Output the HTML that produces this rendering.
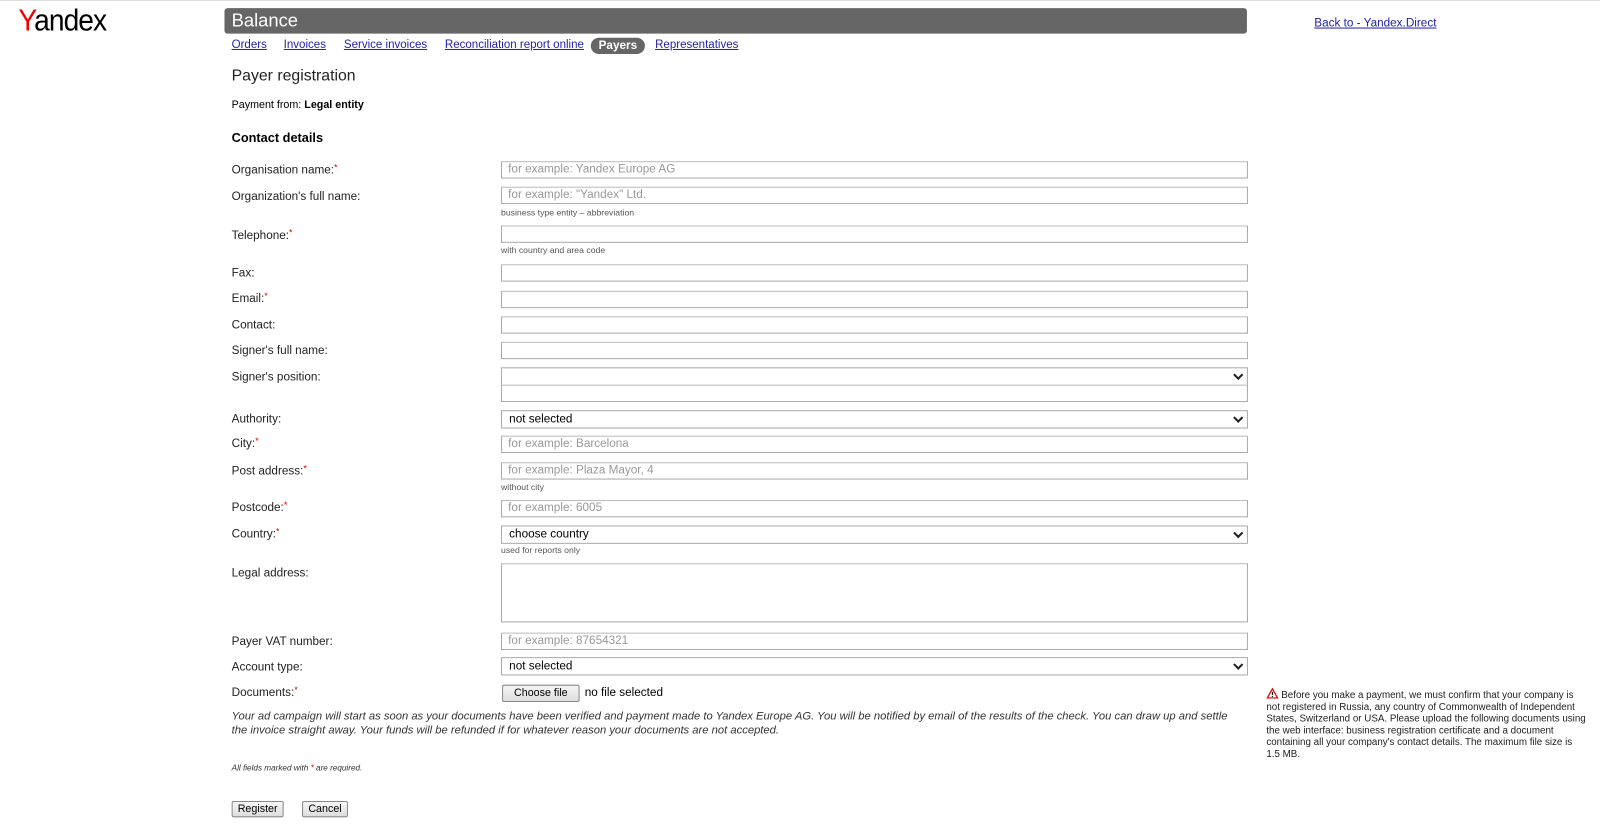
<!DOCTYPE html>
<html><head><meta charset="utf-8"><style>
*{margin:0;padding:0;box-sizing:border-box}
body{width:1600px;height:826px;background:#fff;font-family:"Liberation Sans",Arial,sans-serif;color:#000;position:relative;overflow:hidden;border-top:1px solid #ddd}
#w{position:absolute;left:0;top:0;width:1568px;height:810px;transform:scale(1.0204);transform-origin:0 0}
.a{position:absolute;white-space:nowrap}
.lbl{position:absolute;left:227px;font-size:11.5px;color:#222;line-height:14px}
.st{color:#d00;font-size:9px;vertical-align:top;position:relative;top:-3px}
.in{position:absolute;left:491px;width:732px;height:17px;border:1px solid #aaa;border-top-color:#bbb;background:#fff;font-size:11.5px;color:#999;padding-left:6px;line-height:15px}
.sel{position:absolute;left:491px;width:732px;height:18px;border:1px solid #aaa;background:#fff;font-size:11.5px;color:#000;padding-left:7px;line-height:16px}
.sel:after{content:"";position:absolute;right:5px;top:3px;width:5px;height:5px;border-right:2px solid #222;border-bottom:2px solid #222;transform:rotate(45deg)}
.hint{position:absolute;left:491px;font-size:8.5px;color:#555}
nav a{position:absolute;top:37px;font-size:11.3px;color:#2222aa;text-decoration:underline}
.btn{position:absolute;border:1px solid #888;background:linear-gradient(#f6f6f6,#ddd);font-size:10.5px;text-align:center;line-height:14px;border-radius:2px}
</style></head><body><div id="w">
<div class="a" style="left:18px;top:3px;font-size:30px;letter-spacing:-1px;transform:scaleX(0.92);transform-origin:left"><span style="color:#e00">Y</span>andex</div>
<div class="a" style="left:220px;top:7px;width:1002px;height:25px;background:#666;border-radius:3px;color:#fff;font-size:18px;padding-left:7px;line-height:24px">Balance</div>
<a class="a" style="left:1288px;top:16px;font-size:11.5px;color:#2222aa;text-decoration:underline">Back to - Yandex.Direct</a>
<nav>
<a style="left:227px">Orders</a><a style="left:278px">Invoices</a><a style="left:337px">Service invoices</a><a style="left:436px">Reconciliation report online</a>
<span class="a" style="left:579px;top:36px;width:53px;height:16px;background:#666;color:#fff;border-radius:8px;font-size:11.5px;font-weight:bold;text-align:center;line-height:16px">Payers</span>
<a style="left:642px">Representatives</a>
</nav>
<div class="a" style="left:227px;top:65px;font-size:15.5px;color:#222">Payer registration</div>
<div class="a" style="left:227px;top:96px;font-size:10.5px">Payment from: <b>Legal entity</b></div>
<div class="a" style="left:227px;top:127px;font-size:12.5px;font-weight:bold">Contact details</div>

<div class="lbl" style="top:159px">Organisation name:<span class="st">*</span></div><div class="in" style="top:157px">for example: Yandex Europe AG</div>
<div class="lbl" style="top:185px">Organization's full name:</div><div class="in" style="top:182px">for example: "Yandex" Ltd.</div>
<div class="hint" style="top:202px">business type entity – abbreviation</div>
<div class="lbl" style="top:223px">Telephone:<span class="st">*</span></div><div class="in" style="top:220px"></div>
<div class="hint" style="top:239px">with country and area code</div>
<div class="lbl" style="top:260px">Fax:</div><div class="in" style="top:258px"></div>
<div class="lbl" style="top:285px">Email:<span class="st">*</span></div><div class="in" style="top:284px"></div>
<div class="lbl" style="top:311px">Contact:</div><div class="in" style="top:309px"></div>
<div class="lbl" style="top:336px">Signer's full name:</div><div class="in" style="top:334px"></div>
<div class="lbl" style="top:362px">Signer's position:</div><div class="sel" style="top:359px"></div><div class="in" style="top:376px"></div>
<div class="lbl" style="top:403px">Authority:</div><div class="sel" style="top:401px">not selected</div>
<div class="lbl" style="top:427px">City:<span class="st">*</span></div><div class="in" style="top:426px">for example: Barcelona</div>
<div class="lbl" style="top:454px">Post address:<span class="st">*</span></div><div class="in" style="top:452px">for example: Plaza Mayor, 4</div>
<div class="hint" style="top:471px">without city</div>
<div class="lbl" style="top:490px">Postcode:<span class="st">*</span></div><div class="in" style="top:489px">for example: 6005</div>
<div class="lbl" style="top:516px">Country:<span class="st">*</span></div><div class="sel" style="top:514px">choose country</div>
<div class="hint" style="top:533px">used for reports only</div>
<div class="lbl" style="top:554px">Legal address:</div><div class="in" style="top:551px;height:58px"></div>
<div class="lbl" style="top:621px">Payer VAT number:</div><div class="in" style="top:619px">for example: 87654321</div>
<div class="lbl" style="top:646px">Account type:</div><div class="sel" style="top:643px">not selected</div>
<div class="lbl" style="top:671px">Documents:<span class="st">*</span></div>
<div class="btn" style="left:492px;top:670px;width:76px;height:17px">Choose file</div>
<div class="a" style="left:573px;top:672px;font-size:11.5px">no file selected</div>
<div class="a" style="left:227px;top:694px;font-size:11px;font-style:italic;color:#333;line-height:14px;white-space:normal;width:985px">Your ad campaign will start as soon as your documents have been verified and payment made to Yandex Europe AG. You will be notified by email of the results of the check. You can draw up and settle the invoice straight away. Your funds will be refunded if for whatever reason your documents are not accepted.</div>
<div class="a" style="left:227px;top:747px;font-size:8px;font-style:italic;color:#333">All fields marked with <span style="color:#d00">*</span> are required.</div>
<div class="btn" style="left:227px;top:784px;width:51px;height:16px">Register</div>
<div class="btn" style="left:296px;top:784px;width:45px;height:16px">Cancel</div>
<div class="a" style="left:1241px;top:673px;width:314px;font-size:9.6px;line-height:11.5px;color:#222;white-space:normal"><svg width="12" height="11" viewBox="0 0 12 11" style="vertical-align:-1px"><path d="M6 1 L11 10 H1 Z" fill="#fff" stroke="#d00" stroke-width="1.2"/><path d="M6 4v3M6 8v1" stroke="#000" stroke-width="1.2"/></svg> Before you make a payment, we must confirm that your company is not registered in Russia, any country of Commonwealth of Independent States, Switzerland or USA. Please upload the following documents using the web interface: business registration certificate and a document containing all your company's contact details. The maximum file size is 1.5 MB.</div>
</div></body></html>
